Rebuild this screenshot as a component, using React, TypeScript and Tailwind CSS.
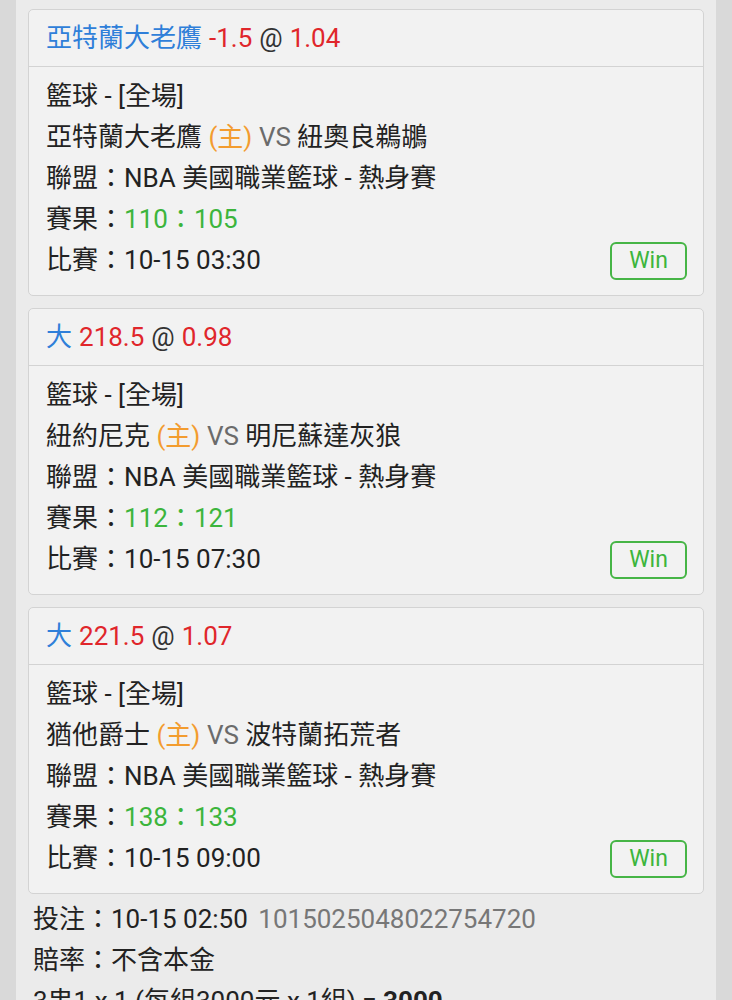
import React from "react";

const font = { fontFamily: 'Roboto, "Noto Sans CJK TC", sans-serif' };

interface Bet {
  pick: string;
  line: string;
  odds: string;
  home: string;
  away: string;
  score: [string, string];
  time: string;
}

const bets: Bet[] = [
  {
    pick: "亞特蘭大老鷹",
    line: "-1.5",
    odds: "1.04",
    home: "亞特蘭大老鷹",
    away: "紐奧良鵜鶘",
    score: ["110", "105"],
    time: "10-15 03:30",
  },
  {
    pick: "大",
    line: "218.5",
    odds: "0.98",
    home: "紐約尼克",
    away: "明尼蘇達灰狼",
    score: ["112", "121"],
    time: "10-15 07:30",
  },
  {
    pick: "大",
    line: "221.5",
    odds: "1.07",
    home: "猶他爵士",
    away: "波特蘭拓荒者",
    score: ["138", "133"],
    time: "10-15 09:00",
  },
];

const BetCard = ({ bet }: { bet: Bet }) => (
  <div className="bg-[#f2f2f2] border border-[#d3d3d3] rounded-[5px]">
    <div className="h-[57px] flex items-center px-[17px] border-b border-[#d3d3d3]">
      <span className="text-[#2f7fd9]">{bet.pick}</span>
      <span className="text-[#e0262b] ml-[7px]">{bet.line}</span>
      <span className="text-[#333] ml-[7px]">@</span>
      <span className="text-[#e0262b] ml-[7px]">{bet.odds}</span>
    </div>
    <div className="px-[17px] pt-[9px] pb-[14px] leading-[41px] text-[#222]">
      <div>籃球 - [全場]</div>
      <div>
        {bet.home} <span className="text-[#f39c2f]">(主)</span>{" "}
        <span className="text-[#6b6b6b]">VS</span> {bet.away}
      </div>
      <div>聯盟：NBA 美國職業籃球 - 熱身賽</div>
      <div>
        賽果：
        <span className="text-[#3cb53c]">
          {bet.score[0]}：{bet.score[1]}
        </span>
      </div>
      <div className="flex items-center justify-between">
        <span>比賽：{bet.time}</span>
        <span className="mr-[-1px] h-[38px] w-[77px] flex items-center justify-center border-2 border-[#46b546] rounded-[6px] text-[#3cb53c] text-[23px] leading-none">
          Win
        </span>
      </div>
    </div>
  </div>
);

export default function App() {
  return (
    <div className="min-h-screen bg-[#d9d9d9] text-[26px]" style={font}>
      <div className="mx-[16px] bg-[#ebebeb] px-[12px] pt-[9px] pb-[20px]">
        <div className="flex flex-col gap-[12px]">
          {bets.map((b, i) => (
            <BetCard key={i} bet={b} />
          ))}
        </div>
        <div className="px-[5px] pt-[5px] leading-[41px] text-[#222]">
          <div>
            投注：10-15 02:50{" "}
            <span className="text-[#777] ml-[4px]">1015025048022754720</span>
          </div>
          <div>賠率：不含本金</div>
          <div>
            3串1 x 1 (每組3000元 x 1組) = <span className="font-bold">3000</span>
          </div>
        </div>
      </div>
    </div>
  );
}
